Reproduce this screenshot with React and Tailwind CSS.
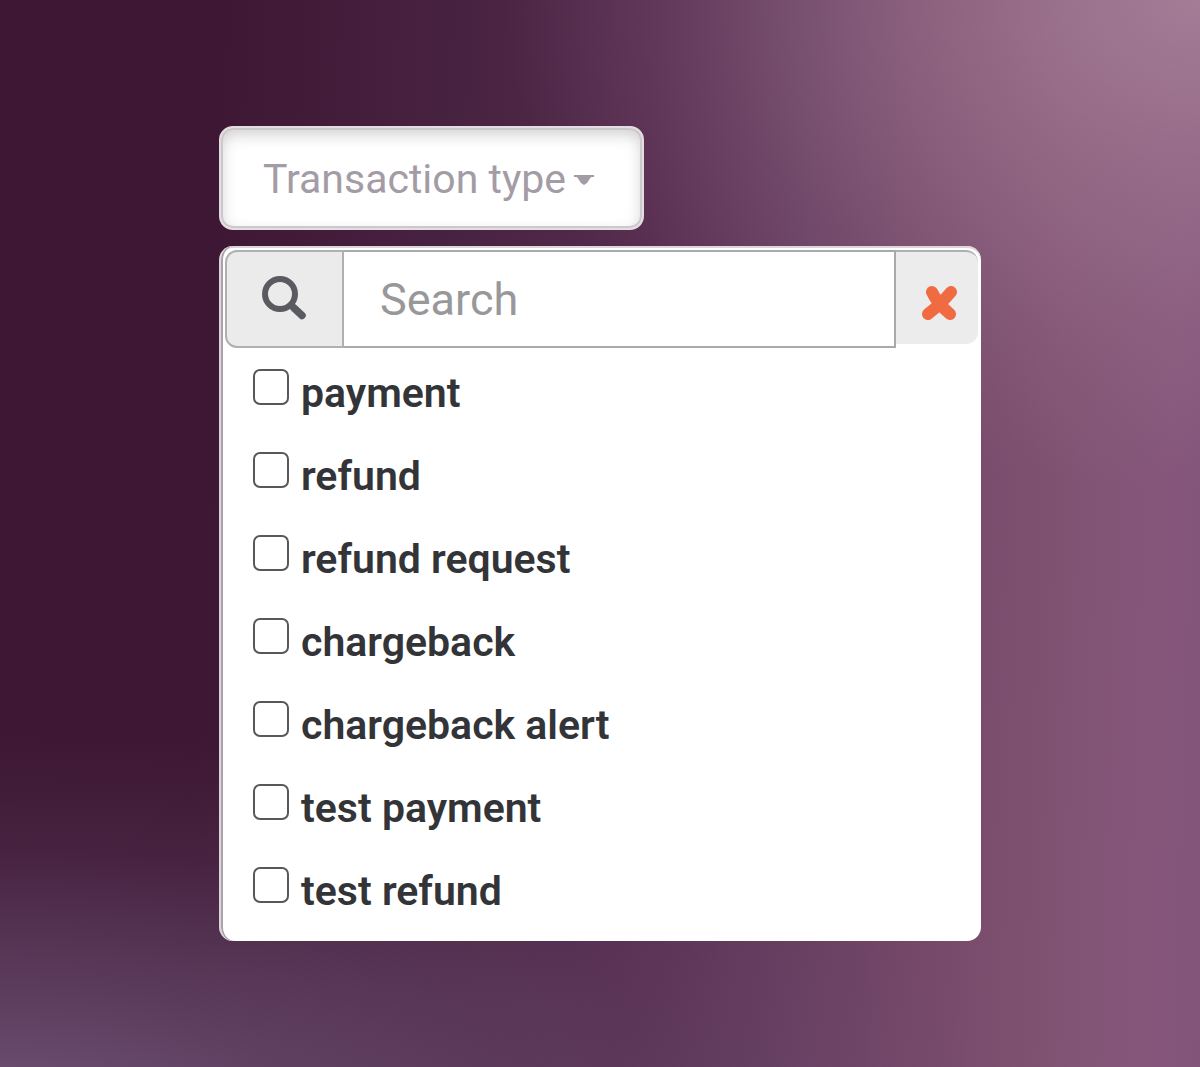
import { useState } from 'react';

const TYPES = [
  'payment',
  'refund',
  'refund request',
  'chargeback',
  'chargeback alert',
  'test payment',
  'test refund',
];

function SearchIcon() {
  return (
    <svg viewBox="0 0 46 46" className="h-[46px] w-[46px]" fill="none" stroke="#5a5b60" aria-hidden="true">
      <circle cx="18" cy="18" r="15" strokeWidth="6" />
      <path d="M28 28l5 5" strokeWidth="6" />
      <path d="M32 32l8 7.500" strokeWidth="7.500" strokeLinecap="round" />
    </svg>
  );
}

function ClearIcon() {
  return (
    <svg viewBox="0 0 36 36" className="h-9 w-9" fill="none" stroke="#f06b42" strokeWidth="12" strokeLinecap="round" aria-hidden="true">
      <path d="M11 8Q16 19 29 30" />
      <path d="M30 8Q20 20 7 30" />
    </svg>
  );
}

export default function App() {
  const [open, setOpen] = useState(true);
  const [query, setQuery] = useState('');
  const [selected, setSelected] = useState([]);

  const toggle = (type) =>
    setSelected((s) => (s.includes(type) ? s.filter((t) => t !== type) : [...s, type]));

  const visible = TYPES.filter((t) => t.includes(query.toLowerCase()));

  return (
    <main className="min-h-screen bg-[#7d4e70] bg-[radial-gradient(ellipse_58%_46%_at_100%_0%,#a47c96_0%,#a47c9699_30%,#a47c9633_70%,#a47c9600_100%),radial-gradient(ellipse_85%_36%_at_0%_105%,#705478_0%,#70547899_35%,#70547833_70%,#70547800_100%),linear-gradient(92deg,#3d1733_0%,#3d1733_18%,#482241_37%,#552c4e_53%,#653d5f_66%,#744768_76%,#805272_87%,#85567a_96%,#83547a_100%)] px-6 pt-[126px] pb-[126px] font-['Roboto',sans-serif]">
      <div className="mx-auto flex max-w-[762px] flex-col items-start gap-4">
        <button
          type="button"
          aria-expanded={open}
          onClick={() => setOpen(!open)}
          className="flex h-[104px] items-center gap-2 rounded-[14px] border-2 border-[#e3dde2] bg-white pt-1 pr-12 pl-[42px] text-[41px] text-[#a39ca6] shadow-[inset_0_0_0_2px_#cdc8cc,inset_0_6px_16px_#00000033]"
        >
          Transaction type
          <svg viewBox="0 0 20 10" className="h-[10px] w-5" fill="#a39ca6" aria-hidden="true">
            <path d="M0 0h20v2h-3l-4 6-3 2-3-2-4-6H0z" />
          </svg>
        </button>

        {open && (
          <div className="w-full overflow-hidden rounded-[14px] border-l-2 border-[#dcd5db] bg-white pb-2 shadow-[inset_2px_0_0_#aaa3aa,inset_0_2px_0_#dcd5db]">
            <div className="mt-1 mr-[3px] ml-1 flex h-[98px]">
              <label htmlFor="type-search" className="flex w-[119px] items-center justify-center rounded-l-[12px] border-2 border-[#b0b0b2] bg-[#ebebec]">
                <SearchIcon />
              </label>
              <input
                id="type-search"
                type="text"
                aria-label="Search types"
                placeholder="Search"
                value={query}
                onChange={(e) => setQuery(e.target.value)}
                className="min-w-0 flex-1 border-y-2 border-r-2 border-[#a9a9ab] bg-white px-9 pt-[2px] text-[45px] text-[#333] outline-none placeholder:text-[#98989b]"
              />
              <button
                type="button"
                aria-label="Clear search"
                onClick={() => setQuery('')}
                className="mb-1 flex w-[82px] items-center justify-center rounded-r-[12px] border-t-2 border-[#b0b0b2] bg-[#ececed] pt-2 pl-1"
              >
                <ClearIcon />
              </button>
            </div>

            <ul className="pt-1 pl-8">
              {visible.map((type) => (
                <li key={type} className="h-[83px]">
                  <label className="flex h-full items-start gap-3 pt-[17px] text-[41px] font-semibold text-[#333438]">
                    <input
                      type="checkbox"
                      checked={selected.includes(type)}
                      onChange={() => toggle(type)}
                      className="h-9 w-9 appearance-none rounded-[7px] border-2 border-[#58585a] bg-white checked:bg-[#58585a]"
                    />
                    <span className="leading-[48px]">{type}</span>
                  </label>
                </li>
              ))}
            </ul>
          </div>
        )}
      </div>
    </main>
  );
}
